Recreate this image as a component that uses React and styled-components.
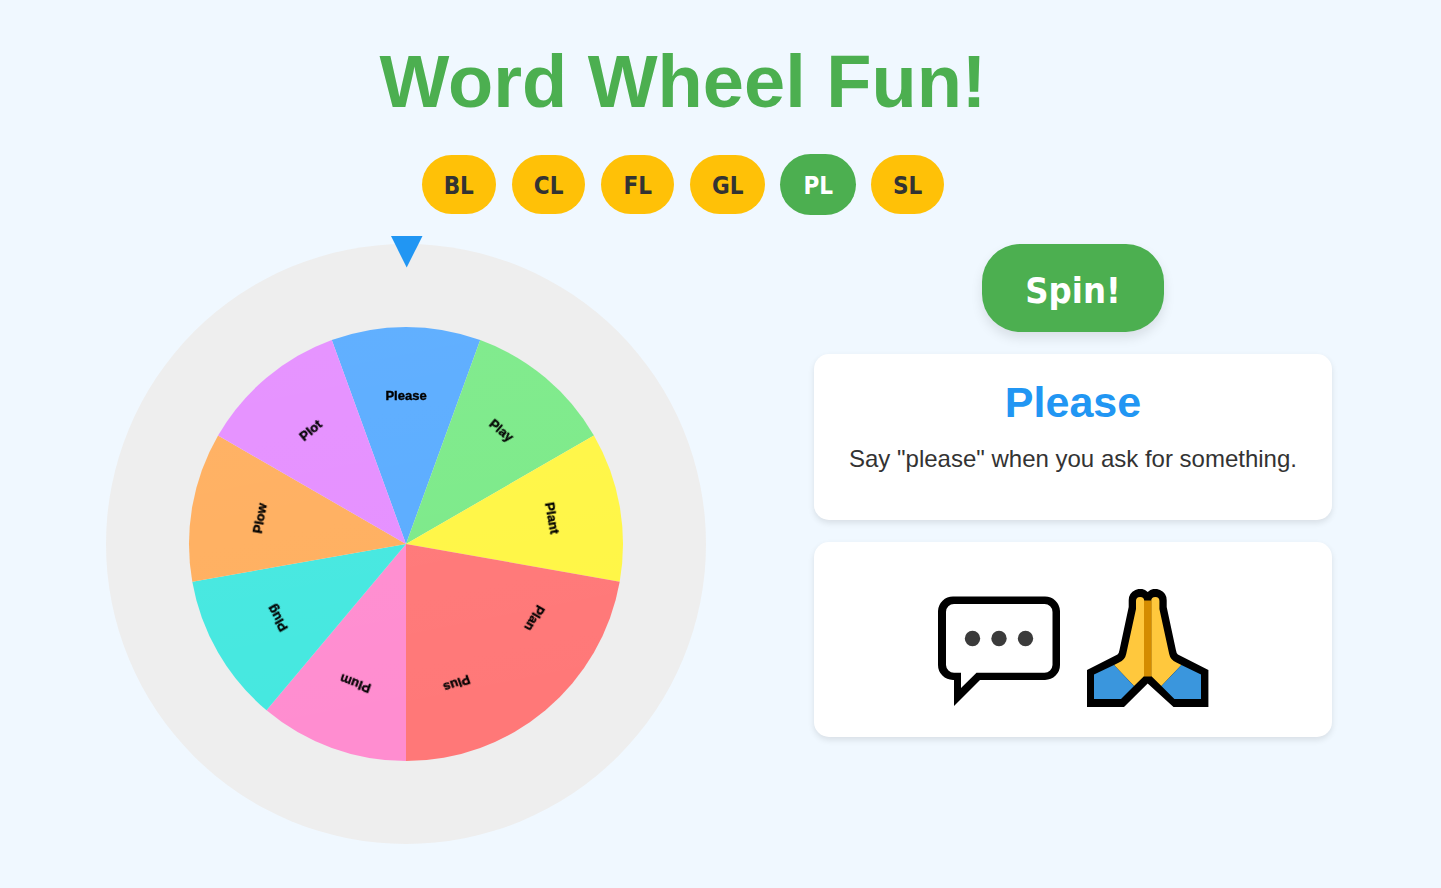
import React, { useState } from "react";
import styled, { createGlobalStyle } from "styled-components";

const GlobalStyle = createGlobalStyle`
  *, *::before, *::after { box-sizing: border-box; }
  body {
    margin: 0;
    background: #f0f8ff;
    color: #333;
    font-family: Arial, "Liberation Sans", sans-serif;
  }
`;

const Page = styled.div`
  display: flex;
  flex-direction: column;
  gap: 30px;
  min-height: 100vh;
  padding: 40px 109px 44px 106px;
`;

const Header = styled.header`
  display: flex;
  flex-direction: column;
  align-items: center;
  gap: 31px;
  padding-right: 72px;
`;

const Title = styled.h1`
  margin: 0;
  color: #4caf50;
  font-size: 74px;
  line-height: 84px;
  font-weight: bold;
`;

const Blends = styled.nav`
  display: flex;
  flex-wrap: wrap;
  justify-content: center;
  gap: 16px;
`;

const BlendButton = styled.button`
  height: 59px;
  padding: 2px 22px 0;
  border: 0;
  border-radius: 30px;
  background: ${(p) => (p.$active ? "#4caf50" : "#ffc107")};
  color: ${(p) => (p.$active ? "#fff" : "#333")};
  box-shadow: ${(p) => (p.$active ? "0 0 0 1px #4caf50" : "none")};
  font: bold 24px "DejaVu Sans Condensed", "DejaVu Sans", sans-serif;
  cursor: pointer;
`;

const Main = styled.main`
  display: flex;
  align-items: flex-start;
  gap: 108px;
`;

const WheelFrame = styled.div`
  position: relative;
  flex: 0 1 600px;
  aspect-ratio: 1;
  border-radius: 50%;
  background: #eee;
`;

const WheelDrawing = styled.svg`
  display: block;
  width: 100%;
  height: 100%;
`;

const WheelWord = styled.text`
  fill: #000;
  font: bold 13px "Liberation Sans", Arial, sans-serif;
  text-anchor: middle;
`;

const Pointer = styled.svg`
  position: absolute;
  top: -8px;
  left: 50%;
  width: 32px;
  height: 32px;
  margin-left: -15px;
  fill: #2196f3;
`;

const Side = styled.section`
  display: flex;
  flex: 1;
  flex-direction: column;
  align-items: center;
  gap: 22px;
`;

const SpinButton = styled.button`
  height: 88px;
  padding: 4px 43px 0;
  border: 0;
  border-radius: 38px;
  background: #4caf50;
  color: #fff;
  box-shadow: 0 6px 12px rgba(0, 0, 0, 0.1);
  font: bold 36px "DejaVu Sans Condensed", "DejaVu Sans", sans-serif;
  cursor: pointer;
`;

const Card = styled.div`
  width: 100%;
  border-radius: 15px;
  background: #fff;
  box-shadow: 0 3px 6px rgba(0, 0, 0, 0.1);
  text-align: center;
`;

const WordCard = styled(Card)`
  min-height: 166px;
  padding: 23px;
`;

const Word = styled.h2`
  margin: 0 0 15px;
  color: #2196f3;
  font-size: 43px;
  line-height: 50px;
`;

const Sentence = styled.p`
  margin: 0;
  font-size: 24px;
  line-height: 34px;
`;

const PictureCard = styled(Card)`
  display: flex;
  align-items: flex-end;
  justify-content: center;
  gap: 27px;
  min-height: 195px;
  padding: 30px;
`;

const BLENDS = ["BL", "CL", "FL", "GL", "PL", "SL"];

const SLICES = [
  { word: "Please", color: "#5aacff" },
  { word: "Play", color: "#7cea89" },
  { word: "Plant", color: "#fff645" },
  { word: "Plan", color: "#ff7878" },
  { word: "Plus", color: "#ff7878" },
  { word: "Plum", color: "#ff8dd0" },
  { word: "Plug", color: "#45e8e0" },
  { word: "Plow", color: "#ffaf5f" },
  { word: "Plot", color: "#e58fff" },
];

const RADIUS = 217;
const STEP = 360 / SLICES.length;

function rim(degrees) {
  const a = (degrees * Math.PI) / 180;
  return `${RADIUS * Math.sin(a)} ${-RADIUS * Math.cos(a)}`;
}

function Wheel() {
  return (
    <WheelFrame>
      <WheelDrawing viewBox="-300 -300 600 600" role="img" aria-label="Word wheel">
        <defs>
          <linearGradient id="sheen" x1="0" y1="0" x2="0.2" y2="1">
            <stop offset="0" stopColor="#fff" stopOpacity="0.05" />
            <stop offset="1" stopColor="#fff" stopOpacity="0" />
          </linearGradient>
          <filter id="soft" x="-20%" y="-50%" width="140%" height="200%">
            <feGaussianBlur stdDeviation="0.6" />
          </filter>
        </defs>
        {SLICES.map(({ word, color }, i) => {
          const from = (i - 0.5) * STEP;
          // Neighbours of one colour are joined so no seam shows between them.
          const next = SLICES[i + 1];
          const prev = SLICES[i - 1];
          if (prev && prev.color === color) return null;
          const to = from + (next && next.color === color ? 2 : 1) * STEP;
          return (
            <path
              key={word}
              d={`M0 0 L${rim(from)} A${RADIUS} ${RADIUS} 0 0 1 ${rim(to)} Z`}
              fill={color}
            />
          );
        })}
        <circle r={RADIUS} fill="url(#sheen)" />
        <g stroke="#000" strokeWidth="0.4">
          {SLICES.map(({ word }, i) => (
            <WheelWord key={word} y="-144" transform={`rotate(${i * STEP})`} filter="url(#soft)">
              {word}
            </WheelWord>
          ))}
        </g>
      </WheelDrawing>
      <Pointer viewBox="0 0 32 32" aria-hidden="true">
        <path d="M0 0H31.5L15.7 31.5Z" />
      </Pointer>
    </WheelFrame>
  );
}

function SpeechBalloon() {
  return (
    <svg width="122" height="111" viewBox="18 26 122 111" role="img" aria-label="speech">
      <path d="M34 110H33A15 15 0 0 1 18 95V41A15 15 0 0 1 33 26.5H125A15 15 0 0 1 140 41V95A15 15 0 0 1 125 110H60L34 136Z" />
      <path
        fill="#fff"
        d="M41 102.7H34A8 8 0 0 1 26 95V42A8 8 0 0 1 34 34H124.500A8 8 0 0 1 132.500 42V95A8 8 0 0 1 124.500 102.700H56.500L41 118Z"
      />
      <g fill="#3b3b3b">
        <circle cx="52.5" cy="68.500" r="7.700" />
        <circle cx="79" cy="68.500" r="7.700" />
        <circle cx="105.500" cy="68.500" r="7.700" />
      </g>
    </svg>
  );
}

function FoldedHands() {
  return (
    <svg width="122" height="118" viewBox="17 19 122 118" role="img" aria-label="please">
      <path d="M17 137V100L47.500 84.500Q49 83.500 49.500 80L58.700 37V30.500A11.300 11.300 0 0 1 77.700 22A11.300 11.300 0 0 1 96.700 30.500V37L105.900 80Q106.400 83.500 107.900 84.500L138.400 100V137H103.500L77.700 113.500L54 137Z" />
      <path fill="#ffc83d" d="M44 95L49 92.500Q55 90 56.200 84L66 39V31A4.100 4.100 0 0 1 74.200 31V106L64 116Z" />
      <path fill="#ffc83d" d="M111.400 95L106.400 92.500Q100.400 90 99.200 84L89.400 39V31A4.100 4.100 0 0 0 81.200 31V106L91.400 116Z" />
      <path fill="#d48c00" d="M74 30.500H81.400V106.500H74Z" />
      <path fill="#3a96dd" d="M24 104.500L44 95L64 116L51 129H24Z" />
      <path fill="#3a96dd" d="M131 104.500L111.400 95L91.400 116L104.400 129H131Z" />
    </svg>
  );
}

export default function App() {
  const [blend, setBlend] = useState("PL");
  return (
    <>
      <GlobalStyle />
      <Page>
        <Header>
          <Title>Word Wheel Fun!</Title>
          <Blends aria-label="Blends">
            {BLENDS.map((name) => (
              <BlendButton
                key={name}
                type="button"
                $active={name === blend}
                aria-pressed={name === blend}
                onClick={() => setBlend(name)}
              >
                {name}
              </BlendButton>
            ))}
          </Blends>
        </Header>
        <Main>
          <Wheel />
          <Side>
            <SpinButton type="button">Spin!</SpinButton>
            <WordCard>
              <Word>Please</Word>
              <Sentence>Say "please" when you ask for something.</Sentence>
            </WordCard>
            <PictureCard>
              <SpeechBalloon />
              <FoldedHands />
            </PictureCard>
          </Side>
        </Main>
      </Page>
    </>
  );
}
